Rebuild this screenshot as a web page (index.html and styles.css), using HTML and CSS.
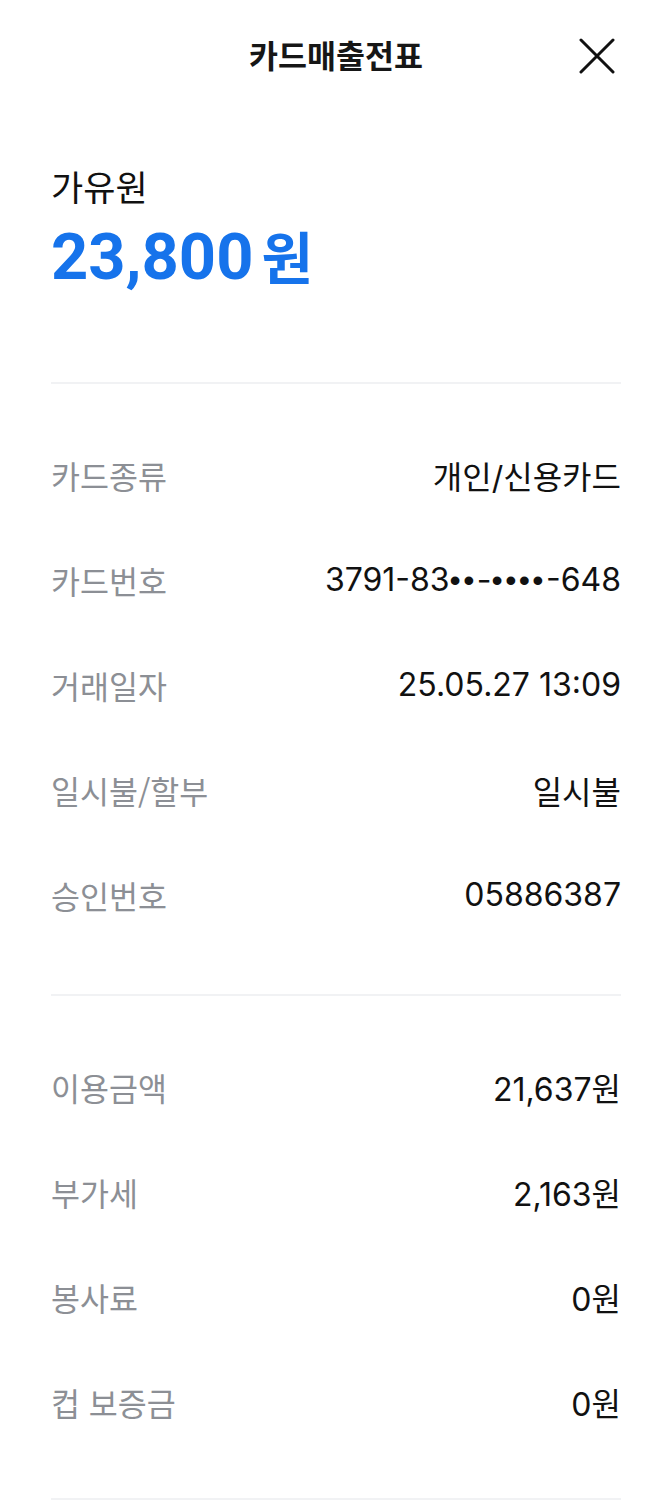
FILE: index.html
```html
<!DOCTYPE html>
<html lang="ko">
<head>
  <meta charset="UTF-8" />
  <meta name="viewport" content="width=device-width, initial-scale=1" />
  <title>카드매출전표</title>
  <link rel="stylesheet" href="styles.css">
</head>
<body>

<div class="receipt">

  <header class="top-bar">
    <span></span>
    <h1 class="title">카드매출전표</h1>
    <button class="close-btn" aria-label="닫기">
      <svg width="36" height="36" viewBox="0 0 36 36" fill="none">
        <path d="M2 2L34 34M34 2L2 34" stroke="#111" stroke-width="3" stroke-linecap="round" />
      </svg>
    </button>
  </header>

  <section class="summary">
    <div class="store">가유원</div>
    <div class="amount">23,800<span class="won">원</span></div>
  </section>

  <section class="info">
    <div class="row"><span class="label">카드종류</span><span class="value">개인/신용카드</span></div>
    <div class="row"><span class="label">카드번호</span><span class="value">3791-83<span class="mask">••</span>-<span class="mask">••••</span>-648</span></div>
    <div class="row"><span class="label">거래일자</span><span class="value">25.05.27 13:09</span></div>
    <div class="row"><span class="label">일시불/할부</span><span class="value">일시불</span></div>
    <div class="row"><span class="label">승인번호</span><span class="value">05886387</span></div>
  </section>

  <section class="info">
    <div class="row"><span class="label">이용금액</span><span class="value">21,637원</span></div>
    <div class="row"><span class="label">부가세</span><span class="value">2,163원</span></div>
    <div class="row"><span class="label">봉사료</span><span class="value">0원</span></div>
    <div class="row"><span class="label">컵 보증금</span><span class="value">0원</span></div>
  </section>

</div>

</body>
</html>
```

FILE: styles.css
```css
body {
  margin: 0;
  background: #fff;
  font-family: Inter, "Noto Sans CJK KR", sans-serif;
  color: #111;
}
.receipt {
  width: 672px;
}
.top-bar {
  display: grid;
  grid-template-columns: 1fr auto 1fr;
  align-items: center;
  height: 112px;
  padding: 0 57px;
}
.title {
  margin: 0 0 4px;
  font-family: "Noto Sans CJK KR", sans-serif;
  font-size: 31.5px;
  font-weight: 700;
  color: #161616;
}
.close-btn {
  justify-self: end;
  background: none;
  border: none;
  padding: 0;
  width: 36px;
  height: 36px;
  cursor: pointer;
}
.summary {
  margin: 0 51px;
  padding: 52px 0 85px;
  border-bottom: 2px solid #f1f2f4;
}
.store {
  font-family: "Noto Sans CJK KR", sans-serif;
  font-size: 35px;
  line-height: 44px;
  color: #111;
}
.amount {
  margin-top: 12px;
  font-family: Roboto, "Noto Sans CJK KR", sans-serif;
  font-size: 65px;
  line-height: 74px;
  font-weight: 700;
  color: #1673eb;
}
.won {
  margin-left: 8px;
  font-size: 56px;
}
.info {
  margin: 0 51px;
  padding: 38px 0 47px;
  border-bottom: 2px solid #f1f2f4;
}
.info + .info {
  padding-bottom: 44px;
}
.row {
  display: flex;
  justify-content: space-between;
  align-items: center;
  height: 105px;
}
.label {
  font-family: "Noto Sans CJK KR", sans-serif;
  font-size: 31.5px;
  color: #8c8f95;
}
.value {
  font-size: 32px;
  color: #111;
}
.mask {
  font-family: "Liberation Sans", sans-serif;
  letter-spacing: 2.4px;
}
```
